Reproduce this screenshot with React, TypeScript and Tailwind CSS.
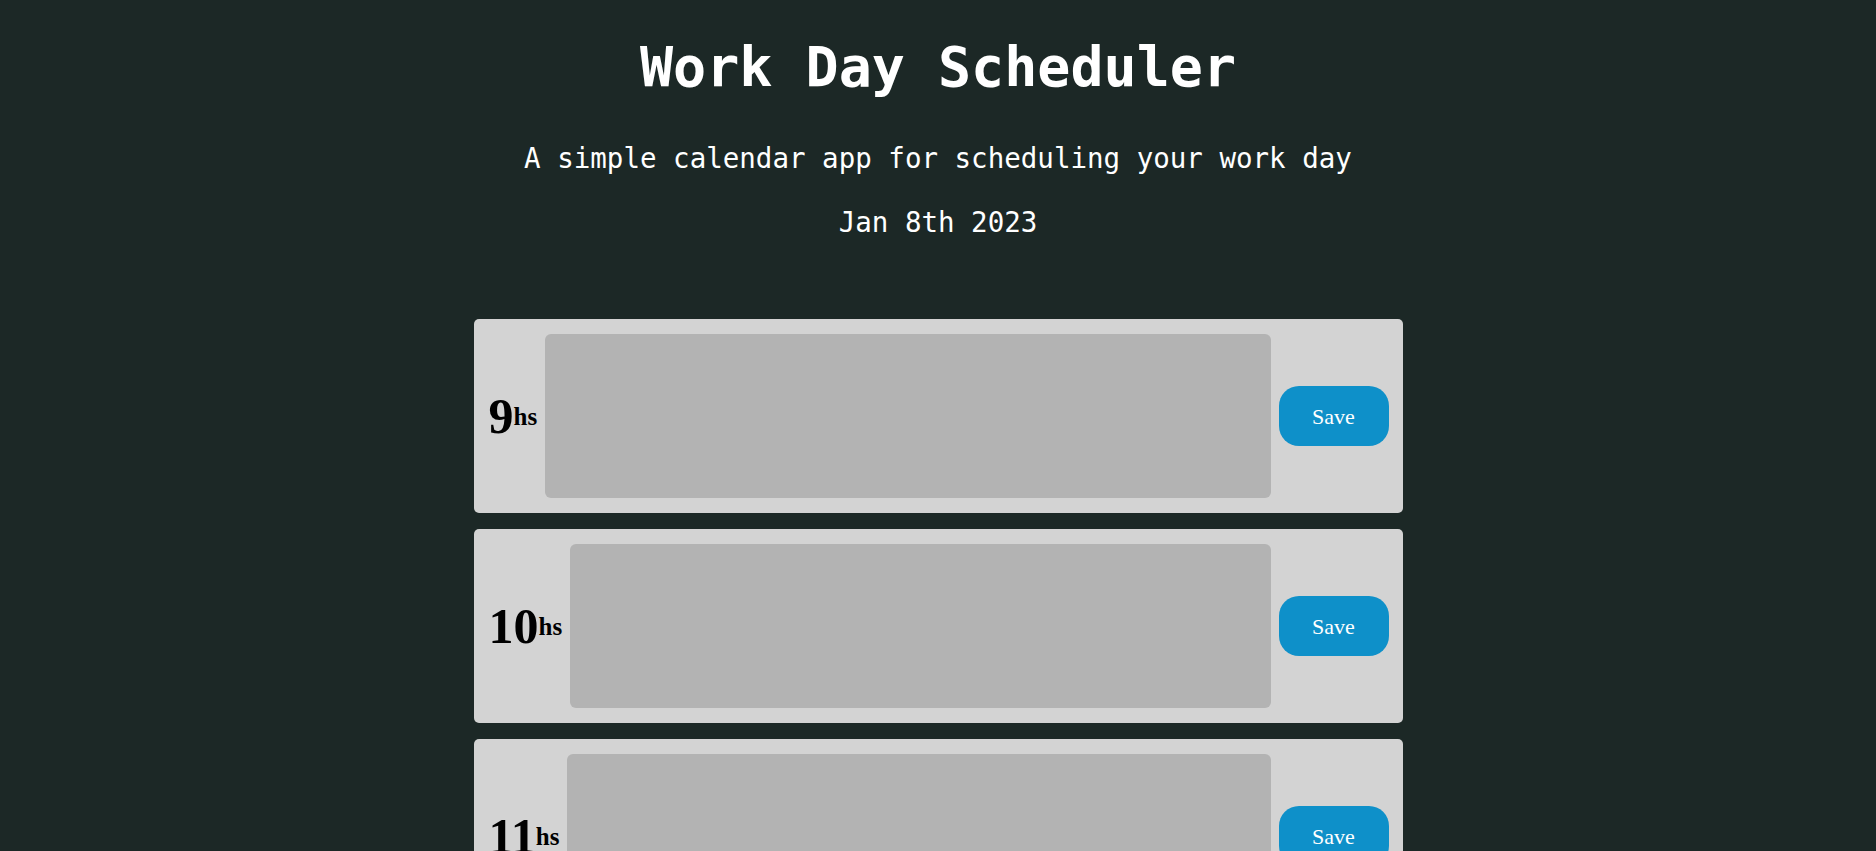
const hours = [9, 10, 11, 12, 13, 14, 15, 16, 17];

function HourRow({ hour }: { hour: number }) {
  return (
    <div className="flex items-center gap-2 rounded-[5px] bg-[#d3d3d3] py-[15px] pl-[15px] pr-[14px]">
      <div className="shrink-0 font-['Liberation_Serif',serif] text-[50px] leading-none font-bold text-black">
        {hour}
        <span className="align-[8px] text-[25px]">hs</span>
      </div>
      <textarea className="h-[164px] flex-1 resize-none rounded-[6px] bg-[#b3b3b3] p-2 outline-none" />
      <button className="h-[60px] w-[110px] shrink-0 rounded-[20px] bg-[#0e90c9] font-['Liberation_Serif',serif] text-[22px] text-white">
        Save
      </button>
    </div>
  );
}

export default function App() {
  return (
    <div className="min-h-screen bg-[#1c2826] pb-10">
      {/* Header */}
      <header className="flex flex-col items-center pt-[40px] font-['DejaVu_Sans_Mono',monospace] text-white">
        <h1 className="text-[55px] leading-none font-bold">Work Day Scheduler</h1>
        <p className="mt-[50px] text-[27.5px] leading-none">A simple calendar app for scheduling your work day</p>
        <p className="mt-[36px] text-[27.5px] leading-none">Jan 8th 2023</p>
      </header>

      {/* Time blocks */}
      <main className="mx-auto mt-[83px] flex w-[929px] flex-col gap-4">
        {hours.map((h) => (
          <HourRow key={h} hour={h} />
        ))}
      </main>
    </div>
  );
}
